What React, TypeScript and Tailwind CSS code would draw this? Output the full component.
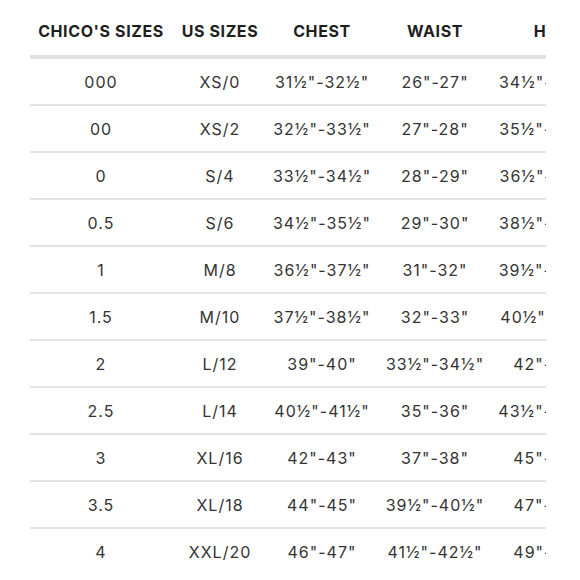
import React from "react";

const rows: string[][] = [
  ["000", "XS/0", "31½\"-32½\"", "26\"-27\"", "34½\"-35½\""],
  ["00", "XS/2", "32½\"-33½\"", "27\"-28\"", "35½\"-36½\""],
  ["0", "S/4", "33½\"-34½\"", "28\"-29\"", "36½\"-37½\""],
  ["0.5", "S/6", "34½\"-35½\"", "29\"-30\"", "38½\"-39½\""],
  ["1", "M/8", "36½\"-37½\"", "31\"-32\"", "39½\"-40½\""],
  ["1.5", "M/10", "37½\"-38½\"", "32\"-33\"", "40½\"-41½\""],
  ["2", "L/12", "39\"-40\"", "33½\"-34½\"", "42\"-43\""],
  ["2.5", "L/14", "40½\"-41½\"", "35\"-36\"", "43½\"-44½\""],
  ["3", "XL/16", "42\"-43\"", "37\"-38\"", "45\"-46\""],
  ["3.5", "XL/18", "44\"-45\"", "39½\"-40½\"", "47\"-48\""],
  ["4", "XXL/20", "46\"-47\"", "41½\"-42½\"", "49\"-50\""],
];

const headers = ["CHICO'S SIZES", "US SIZES", "CHEST", "WAIST", "HIP"];

const cols = "grid grid-cols-[142px_96px_108px_118px_108px]";

export default function App() {
  return (
    <div
      className="w-[580px] h-[580px] bg-white overflow-hidden"
      style={{ fontFamily: '"Inter", "DejaVu Sans", sans-serif' }}
    >
      <div className="w-[546px] overflow-hidden pl-[30px]">
        <div className="w-[572px]">
          <div className={`${cols} h-[55px] items-center pt-[6px] text-[16px] font-bold text-[#1e1e1e] tracking-[0.6px]`}>
            {headers.map((h) => (
              <div key={h} className="text-center whitespace-nowrap">
                {h}
              </div>
            ))}
          </div>
          <div className="h-[4px] bg-[#e0e0e0]" />
          {rows.map((r, i) => (
            <div key={i}>
              <div className={`${cols} h-[45px] items-center text-[16px] text-[#333333] tracking-[1px]`}>
                {r.map((c, j) => (
                  <div key={j} className="text-center whitespace-nowrap">
                    {c}
                  </div>
                ))}
              </div>
              {i < rows.length - 1 && <div className="h-[2px] bg-[#e3e3e3]" />}
            </div>
          ))}
        </div>
      </div>
    </div>
  );
}
